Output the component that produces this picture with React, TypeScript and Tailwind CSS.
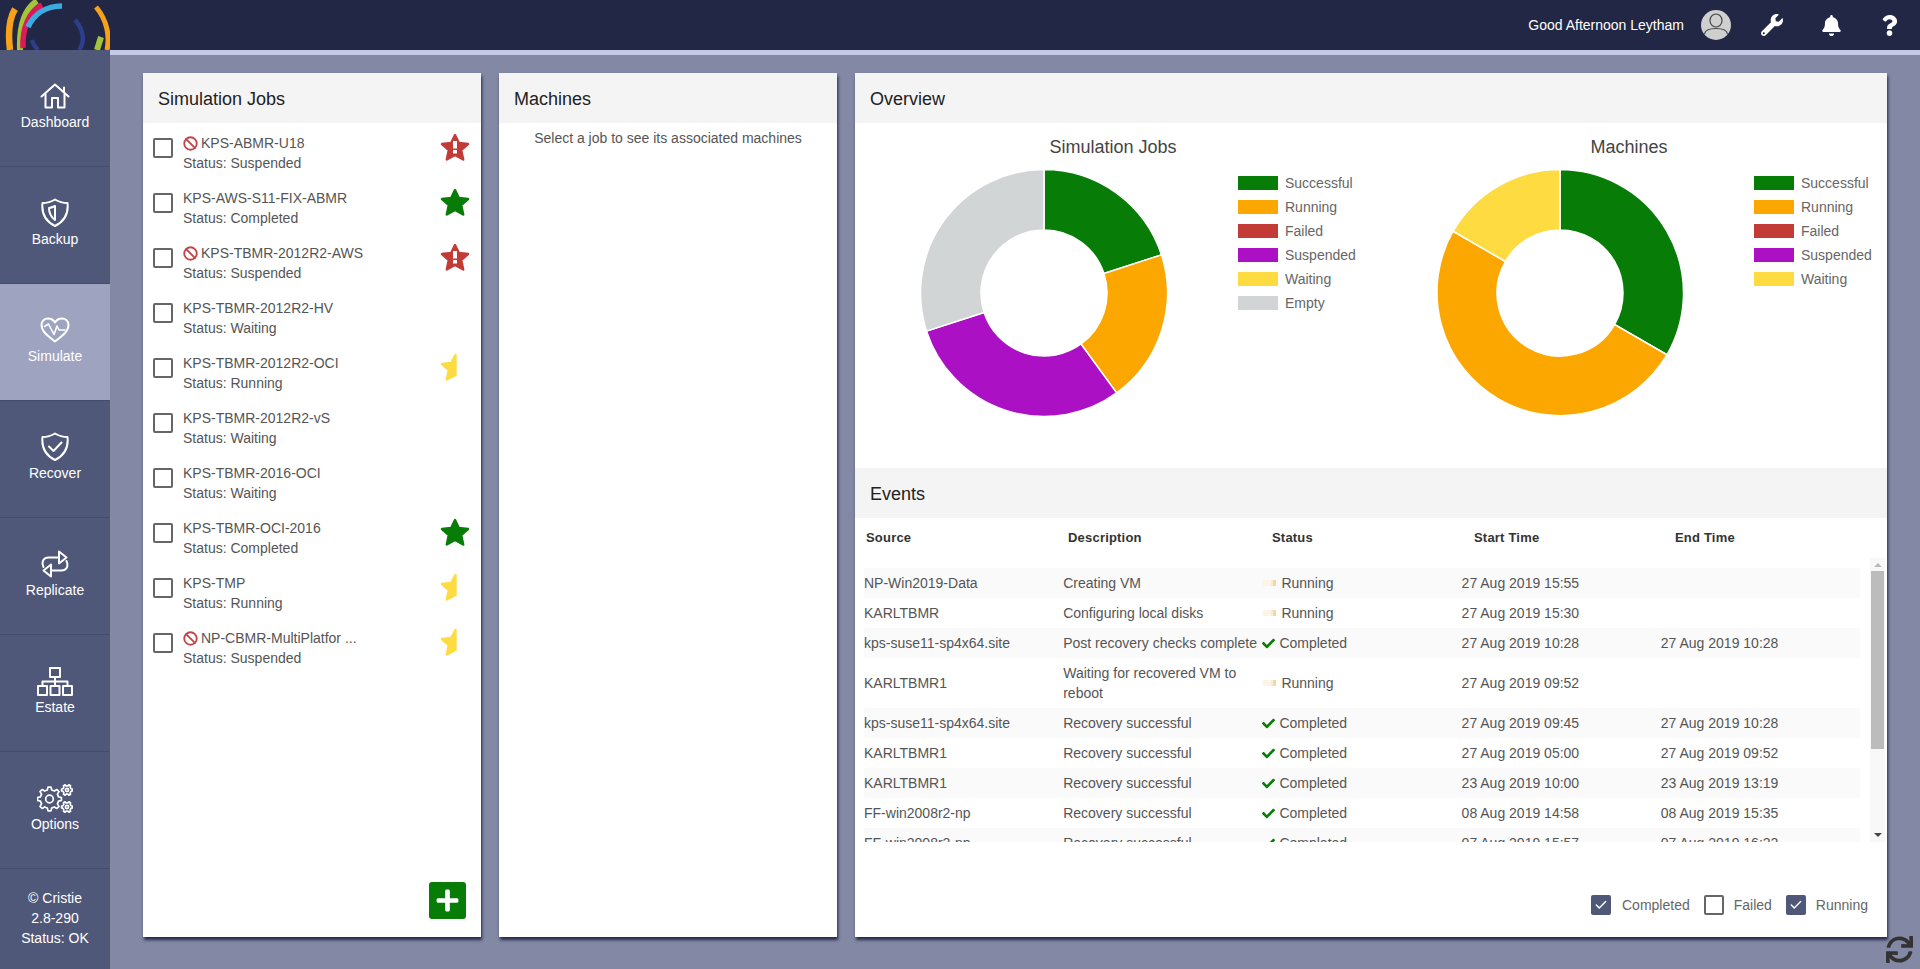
import * as React from "react";
import { Ban, Check } from "lucide-react";
import { FaBell, FaCheck, FaPlus, FaQuestion, FaSync, FaWrench } from "react-icons/fa";

const GREEN = "#077c07";
const ORANGE = "#fca600";
const RED = "#c23b37";
const PURPLE = "#ab10c4";
const YELLOW = "#fedb41";
const GRAY = "#d2d5d6";

const JOBS = [
  { name: "KPS-ABMR-U18", status: "Suspended", banned: true, star: "failed" },
  { name: "KPS-AWS-S11-FIX-ABMR", status: "Completed", star: "ok" },
  { name: "KPS-TBMR-2012R2-AWS", status: "Suspended", banned: true, star: "failed" },
  { name: "KPS-TBMR-2012R2-HV", status: "Waiting" },
  { name: "KPS-TBMR-2012R2-OCI", status: "Running", star: "half" },
  { name: "KPS-TBMR-2012R2-vS", status: "Waiting" },
  { name: "KPS-TBMR-2016-OCI", status: "Waiting" },
  { name: "KPS-TBMR-OCI-2016", status: "Completed", star: "ok" },
  { name: "KPS-TMP", status: "Running", star: "half" },
  { name: "NP-CBMR-MultiPlatfor ...", status: "Suspended", banned: true, star: "half" },
];

const EVENTS = [
  ["NP-Win2019-Data", "Creating VM", "Running", "27 Aug 2019 15:55", ""],
  ["KARLTBMR", "Configuring local disks", "Running", "27 Aug 2019 15:30", ""],
  ["kps-suse11-sp4x64.site", "Post recovery checks complete", "Completed", "27 Aug 2019 10:28", "27 Aug 2019 10:28"],
  ["KARLTBMR1", "Waiting for recovered VM to reboot", "Running", "27 Aug 2019 09:52", ""],
  ["kps-suse11-sp4x64.site", "Recovery successful", "Completed", "27 Aug 2019 09:45", "27 Aug 2019 10:28"],
  ["KARLTBMR1", "Recovery successful", "Completed", "27 Aug 2019 05:00", "27 Aug 2019 09:52"],
  ["KARLTBMR1", "Recovery successful", "Completed", "23 Aug 2019 10:00", "23 Aug 2019 13:19"],
  ["FF-win2008r2-np", "Recovery successful", "Completed", "08 Aug 2019 14:58", "08 Aug 2019 15:35"],
  ["FF-win2008r2-np", "Recovery successful", "Completed", "07 Aug 2019 15:57", "07 Aug 2019 16:22"],
];

const SHIELD = "M14 1.5C18 4 22 5 26.5 5C27.5 14 24 23 14 28C4 23 .5 14 1.5 5C6 5 10 4 14 1.5Z";

function gearPath(cx: number, cy: number, ro: number, ri: number, n: number) {
  const pts: string[] = [];
  const step = (Math.PI * 2) / n;
  for (let i = 0; i < n; i++) {
    const a = i * step;
    [[-0.3, ri], [-0.16, ro], [0.16, ro], [0.3, ri]].forEach(([o, r]) => {
      const t = a + o * step;
      pts.push(`${(cx + Math.cos(t) * r).toFixed(2)} ${(cy + Math.sin(t) * r).toFixed(2)}`);
    });
  }
  return `M${pts.join("L")}Z`;
}

function NavIcon({ name }: { name: string }) {
  const common = { fill: "none", stroke: "white", strokeWidth: 2, strokeLinejoin: "round" as const, strokeLinecap: "round" as const };
  if (name === "Dashboard")
    return (
      <svg width="30" height="26" viewBox="0 0 30 26" {...common}>
        <path d="M1.5 13.5L15 1.5L28.5 13.5M24 9.5V4.5" />
        <path d="M5.5 11V24.5H12V15H18V24.5H24.5V11" />
      </svg>
    );
  if (name === "Backup")
    return (
      <svg width="28" height="30" viewBox="0 0 28 30" {...common}>
        <path d={SHIELD} />
        <path d="M14 8C12 9 10 9.8 8 10C8 15 10 19 14 22Z" />
      </svg>
    );
  if (name === "Simulate")
    return (
      <svg width="30" height="26" viewBox="0 0 30 26" {...common}>
        <path d="M15 24.5C8 19 1.5 14.5 1.5 8C1.5 4 4.5 1.5 8 1.5C11 1.5 13.5 3 15 5.5C16.5 3 19 1.5 22 1.5C25.5 1.5 28.5 4 28.5 8C28.5 14.5 22 19 15 24.5Z" />
        <path d="M4.5 9.5L8.5 7L14 17.5L17 9L19 13H25" strokeWidth="1.6" />
      </svg>
    );
  if (name === "Recover")
    return (
      <svg width="28" height="30" viewBox="0 0 28 30" {...common}>
        <path d={SHIELD} />
        <path d="M8 14.5L12.5 19L20.5 10.5" />
      </svg>
    );
  if (name === "Replicate")
    return (
      <svg width="30" height="30" viewBox="0 0 30 30" {...common}>
        <path d="M3.5 18C1 12 4 8.5 8.5 8.5H19" />
        <path d="M19 2.5L26.5 8.5L19 14.5Z" />
        <path d="M26.5 12C29 18 26 21.5 21.5 21.5H11" />
        <path d="M11 15.5L3.5 21.5L11 27.5Z" />
      </svg>
    );
  if (name === "Estate")
    return (
      <svg width="36" height="29" viewBox="0 0 36 29" {...common}>
        <rect x="13" y="1" width="10" height="9" />
        <rect x="1" y="19" width="9" height="9" />
        <rect x="13.5" y="19" width="9" height="9" />
        <rect x="26" y="19" width="9" height="9" />
        <path d="M18 10V19M5.5 19V14.5H30.5V19" />
      </svg>
    );
  return (
    <svg width="36" height="29" viewBox="0 0 36 29" {...common} strokeWidth="1.7">
      <path d={gearPath(12.5, 15, 12, 9.3, 8)} />
      <circle cx="12.5" cy="15" r="3.8" />
      <path d={gearPath(30, 6, 5.5, 4.2, 6)} />
      <circle cx="30" cy="6" r="1.6" />
      <path d={gearPath(30, 23, 5.5, 4.2, 6)} />
      <circle cx="30" cy="23" r="1.6" />
    </svg>
  );
}

function Logo() {
  return (
    <svg width="110" height="50" viewBox="0 0 110 50" fill="none" strokeWidth="5.5">
      <path d="M15 9C9 19 8 34 10 50" stroke="#f7a11a" strokeWidth="6.5" />
      <path d="M37 1C26 8 19 24 20 50" stroke="#a3c537" strokeWidth="6" />
      <path d="M42 5C29 12 22 28 23 48" stroke="#dc1a5b" strokeWidth="5.5" />
      <path d="M62 6C46 6 34 14 28 27" stroke="#3cabe0" />
      <path d="M75 20C84 30 85 42 79 50M32 40C33 44 35 47 38 50" stroke="#2c3e8c" strokeWidth="4.5" />
      <path d="M96 7C107 20 110 36 107 50" stroke="#f7a11a" strokeWidth="5" />
      <path d="M101 37L97 50" stroke="#a3c537" strokeWidth="6" />
    </svg>
  );
}

function Star({ kind }: { kind?: string }) {
  if (!kind) return null;
  const color = kind === "failed" ? RED : kind === "ok" ? GREEN : YELLOW;
  const pts =
    kind === "half"
      ? "15.5,2 11.2,10 2,11 8.8,17 6.8,26.5 15.5,22"
      : "15,2 18.8,10 28,11 21.2,17 23.2,26.5 15,22 6.8,26.5 8.8,17 2,11 11.2,10";
  return (
    <svg width="30" height="28" viewBox="0 0 30 28" className="mt-[10px] ml-auto mr-[11px] shrink-0">
      <polygon points={pts} fill={color} stroke={color} strokeWidth="2.4" strokeLinejoin="round" />
      {kind === "failed" && (
        <g fill="white">
          <rect x="13" y="8" width="4" height="7.5" />
          <rect x="13" y="17" width="4" height="3.5" />
        </g>
      )}
    </svg>
  );
}

function Box({ checked }: { checked?: boolean }) {
  return checked ? (
    <span className="flex h-5 w-5 shrink-0 items-center justify-center rounded-[2px] bg-[#50587a]">
      <Check size={14} color="white" strokeWidth={2.5} />
    </span>
  ) : (
    <span className="block h-5 w-5 shrink-0 rounded-[2px] border-2 border-[#666]" />
  );
}

function PanelHead({ title }: { title: string }) {
  return <div className="flex h-[50px] shrink-0 items-center bg-[#f4f4f4] px-[15px] pt-px text-[18px] text-[#222]">{title}</div>;
}

function Donut({ hole, slices }: { hole: number; slices: { value: number; color: string }[] }) {
  const r = 123.5;
  const arc = (from: number, to: number) => {
    const pt = (a: number, rad: number) => {
      const t = ((a - 90) * Math.PI) / 180;
      return `${(125 + Math.cos(t) * rad).toFixed(2)} ${(125 + Math.sin(t) * rad).toFixed(2)}`;
    };
    const large = to - from > 180 ? 1 : 0;
    return `M${pt(from, r)}A${r} ${r} 0 ${large} 1 ${pt(to, r)}L${pt(to, hole)}A${hole} ${hole} 0 ${large} 0 ${pt(from, hole)}Z`;
  };
  let start = 0;
  return (
    <svg width="250" height="250" viewBox="0 0 250 250" className="shrink-0">
      {slices.map((s) => {
        const end = start + s.value;
        const d = arc(start, end);
        start = end;
        return <path key={s.color} d={d} fill={s.color} stroke="white" strokeWidth="1.5" />;
      })}
    </svg>
  );
}

function Legend({ items }: { items: [string, string][] }) {
  return (
    <div className="mt-[3px] ml-[69px] text-[#666]">
      {items.map(([label, color]) => (
        <div key={label} className="flex h-6 items-center gap-[7px]">
          <span className="block h-[14px] w-10" style={{ backgroundColor: color }} />
          {label}
        </div>
      ))}
    </div>
  );
}

function RunningMark() {
  return (
    <svg width="13" height="8" viewBox="0 0 13 8" className="mr-[5px] ml-[1px] shrink-0">
      <rect x="0" y="1" width="8" height="6" fill="#fdf4e6" />
      <rect x="8" y="1" width="2" height="6" fill="#fbeccf" />
      <rect x="10" y="1" width="3" height="6" fill="#f6d6a2" />
    </svg>
  );
}

const NAV = ["Dashboard", "Backup", "Simulate", "Recover", "Replicate", "Estate", "Options"];

export default function App() {
  return (
    <div className="relative flex h-screen w-full flex-col overflow-hidden bg-[#8389a5] font-['Liberation_Sans',Arial,sans-serif] text-[14px] leading-5">
      <header className="flex h-[50px] shrink-0 items-center bg-[#212744] text-white">
        <Logo />
        <span className="ml-auto">Good Afternoon Leytham</span>
        <svg width="30" height="30" viewBox="0 0 30 30" className="ml-[17px]">
          <circle cx="15" cy="15" r="15" fill="#cfcfcf" />
          <ellipse cx="15" cy="10.5" rx="6" ry="6.5" fill="none" stroke="#444" strokeWidth="1.2" />
          <path d="M3.5 24C4 20 9 18.5 15 18.5C21 18.5 26 20 26.5 24" fill="none" stroke="#444" strokeWidth="1.2" />
        </svg>
        <FaWrench size={22} className="ml-[30px]" />
        <FaBell size={21} className="ml-[38px]" />
        <FaQuestion size={21} className="ml-[37px] mr-[20px]" />
      </header>

      <div className="flex min-h-0 flex-1">
        <aside className="flex w-[110px] shrink-0 flex-col bg-[#50587a] text-white">
          {NAV.map((name) => (
            <div
              key={name}
              className={`flex h-[117px] flex-col items-center border-b border-[#454c6c] pt-[31px] ${name === "Simulate" ? "bg-[#9ea3c0]" : ""}`}
            >
              <div className="flex h-[30px] items-center">
                <NavIcon name={name} />
              </div>
              <span className="mt-px">{name}</span>
            </div>
          ))}
          <div className="pt-[19px] text-center">
            © Cristie
            <br />
            2.8-290
            <br />
            Status: OK
          </div>
        </aside>

        <main className="flex min-w-0 flex-1 gap-[18px] border-t-[5px] border-[#c5c9e8] pt-[18px] pl-[33px]">
          <section className="relative flex h-[864px] w-[338px] flex-col bg-white shadow-[1px_3px_3px_rgba(20,25,60,0.85)]">
            <PanelHead title="Simulation Jobs" />
            {JOBS.map((job) => (
              <div key={job.name} className="flex h-[55px] shrink-0 text-[#555]">
                <div className="mt-[15px] ml-[10px]">
                  <Box />
                </div>
                <div className="ml-[10px] pt-[10px]">
                  <div className="flex items-center">
                    {job.banned && <Ban size={15} color="#c0474a" strokeWidth={3} className="mr-[3px]" />}
                    {job.name}
                  </div>
                  <div>Status: {job.status}</div>
                </div>
                <Star kind={job.star} />
              </div>
            ))}
            <div className="mt-auto mr-[15px] mb-[18px] flex h-[37px] w-[37px] items-center justify-center self-end rounded-[3px] bg-[#077c07]">
              <FaPlus size={25} color="white" />
            </div>
          </section>

          <section className="h-[864px] w-[338px] bg-white shadow-[1px_3px_3px_rgba(20,25,60,0.85)]">
            <PanelHead title="Machines" />
            <p className="pt-[5px] text-center text-[#555]">Select a job to see its associated machines</p>
          </section>

          <section className="flex h-[864px] w-[1032px] flex-col bg-white shadow-[1px_3px_3px_rgba(20,25,60,0.85)]">
            <PanelHead title="Overview" />
            <div className="grid h-[345px] shrink-0 grid-cols-2 pt-[14px]">
              <div>
                <div className="text-center text-[18px] text-[#444]">Simulation Jobs</div>
                <div className="mt-[11px] ml-[64px] flex">
                  <Donut
                    hole={63}
                    slices={[
                      { value: 72, color: GREEN },
                      { value: 72, color: ORANGE },
                      { value: 108, color: PURPLE },
                      { value: 108, color: GRAY },
                    ]}
                  />
                  <Legend
                    items={[
                      ["Successful", GREEN],
                      ["Running", ORANGE],
                      ["Failed", RED],
                      ["Suspended", PURPLE],
                      ["Waiting", YELLOW],
                      ["Empty", GRAY],
                    ]}
                  />
                </div>
              </div>
              <div>
                <div className="text-center text-[18px] text-[#444]">Machines</div>
                <div className="mt-[11px] ml-[64px] flex">
                  <Donut
                    hole={63}
                    slices={[
                      { value: 120, color: GREEN },
                      { value: 180, color: ORANGE },
                      { value: 60, color: YELLOW },
                    ]}
                  />
                  <Legend
                    items={[
                      ["Successful", GREEN],
                      ["Running", ORANGE],
                      ["Failed", RED],
                      ["Suspended", PURPLE],
                      ["Waiting", YELLOW],
                    ]}
                  />
                </div>
              </div>
            </div>

            <PanelHead title="Events" />
            <div className="grid h-10 shrink-0 grid-cols-[202px_204px_202px_201px_1fr] items-center pl-[11px] text-[13px] font-bold tracking-[0.2px] text-[#333]">
              <span>Source</span>
              <span>Description</span>
              <span>Status</span>
              <span>Start Time</span>
              <span>End Time</span>
            </div>
            <div className="flex h-[284px] shrink-0">
              <div className="mt-[10px] ml-[9px] w-[996px] overflow-hidden text-[#555]">
                {EVENTS.map((row, i) => (
                  <div key={i} className={`grid grid-cols-5 items-center py-[5px] ${i % 2 === 0 ? "bg-[#fafafa]" : ""}`}>
                    <span>{row[0]}</span>
                    <span>{row[1]}</span>
                    <span className="flex items-center">
                      {row[2] === "Running" ? <RunningMark /> : <FaCheck size={13} color={GREEN} className="mr-[4px]" />}
                      {row[2]}
                    </span>
                    <span>{row[3]}</span>
                    <span>{row[4]}</span>
                  </div>
                ))}
              </div>
              <div className="ml-[10px] flex w-[15px] flex-col items-center bg-[#f8f8f8] pt-[5px] pb-[5px]">
                <span className="h-0 w-0 border-x-[4px] border-b-[4px] border-x-transparent border-b-[#bbb]" />
                <span className="mt-[4px] h-[178px] w-[13px] bg-[#bcbcbc]" />
                <span className="mt-auto h-0 w-0 border-x-[4px] border-t-[4px] border-x-transparent border-t-[#444]" />
              </div>
            </div>
            <div className="mt-[53px] flex items-center pl-[736px] text-[#666]">
              <Box checked />
              <span className="ml-[11px]">Completed</span>
              <span className="ml-[14px]">
                <Box />
              </span>
              <span className="ml-[10px]">Failed</span>
              <span className="ml-[14px]">
                <Box checked />
              </span>
              <span className="ml-[10px]">Running</span>
            </div>
          </section>
        </main>
      </div>
      <FaSync size={27} color="#333" className="absolute right-[7px] bottom-[6px]" />
    </div>
  );
}
